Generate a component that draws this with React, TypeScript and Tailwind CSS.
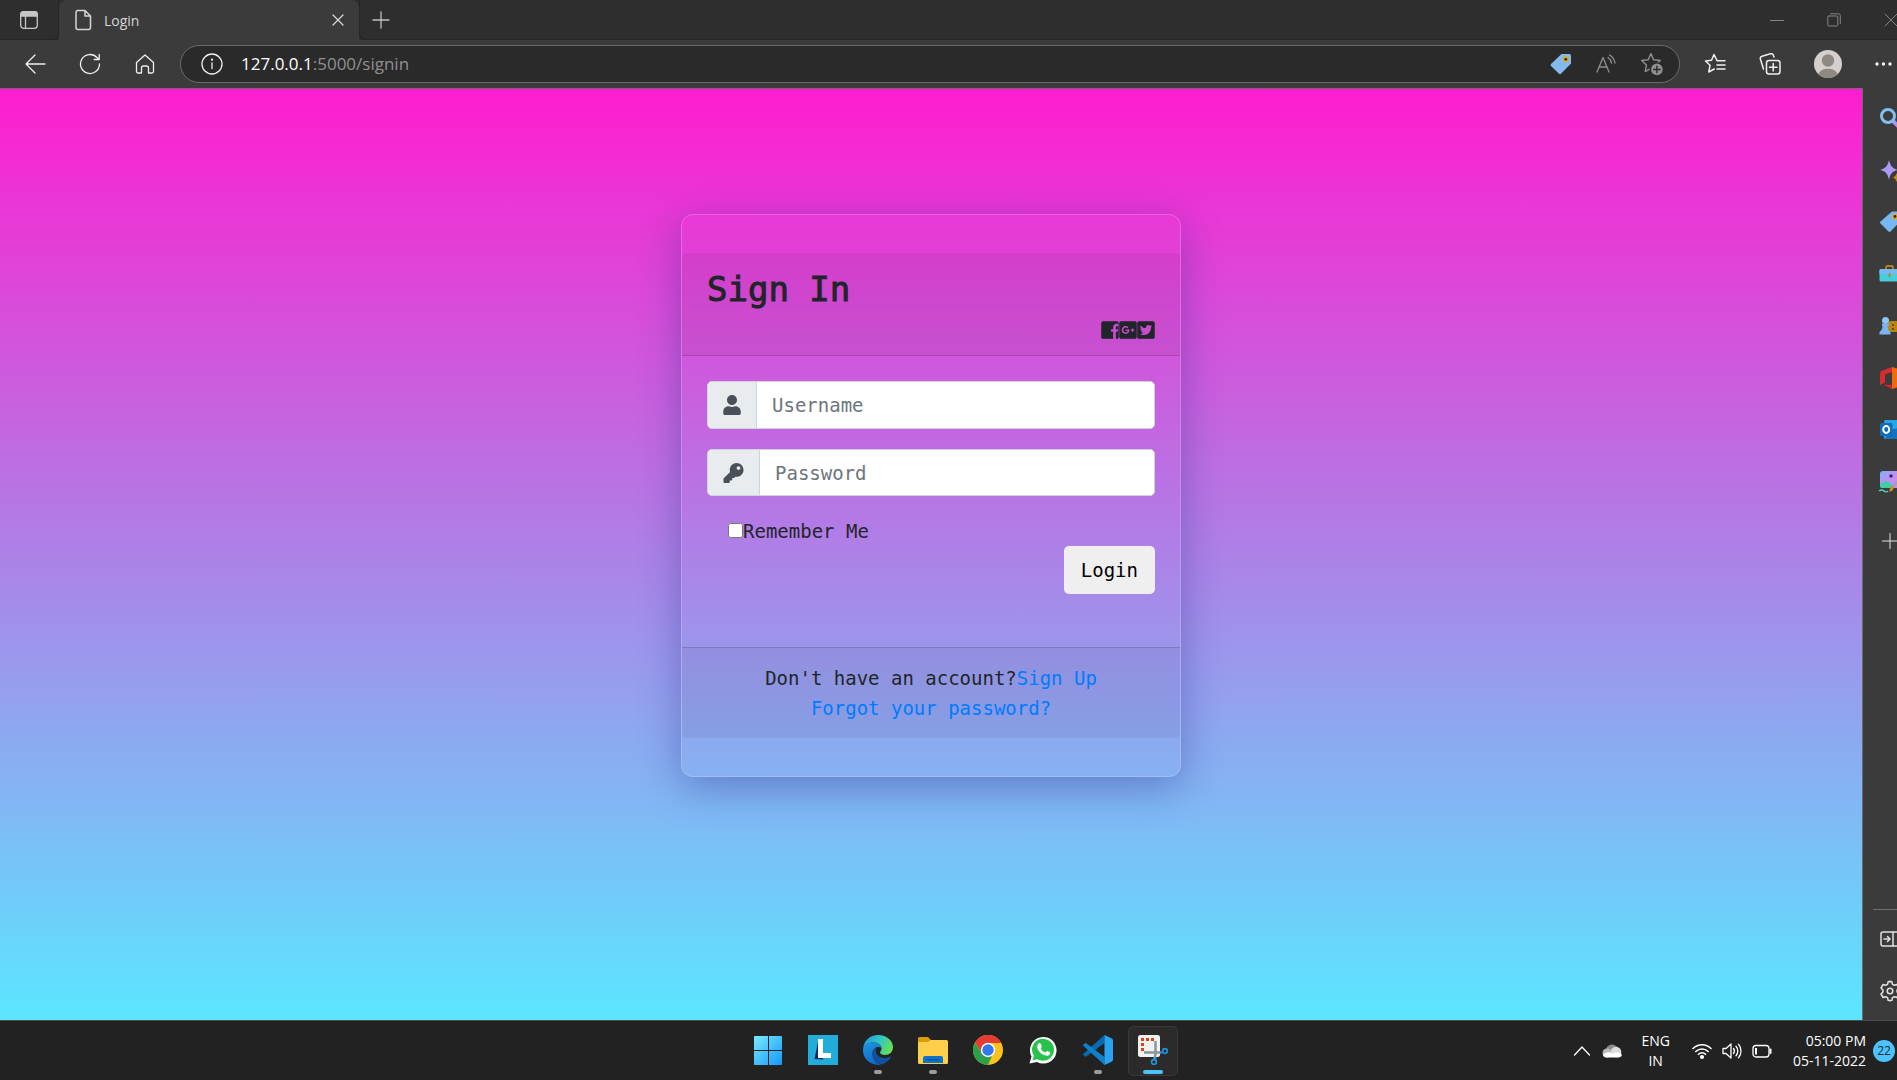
import React from "react";
import { FaUser, FaKey, FaGooglePlusSquare, FaTwitterSquare } from "react-icons/fa";

type IconProps = { size?: number; box?: string; className?: string; sw?: number; children: React.ReactNode };

function Icon({ size = 20, box = "0 0 20 20", className = "", sw = 1.3, children }: IconProps) {
  return (
    <svg
      width={size}
      height={size}
      viewBox={box}
      fill="none"
      stroke="currentColor"
      strokeWidth={sw}
      strokeLinecap="round"
      strokeLinejoin="round"
      aria-hidden="true"
      className={"shrink-0 " + className}
    >
      {children}
    </svg>
  );
}

const iconButton = "flex h-9 w-9 shrink-0 items-center justify-center";
const starPath = "M10 1.5l2.5 5.6 6 .7-4.4 4.1 1.1 6L10 15l-5.2 2.9 1.1-6L1.5 7.8l6-.7z";

function TabStrip() {
  return (
    <header className="flex h-10 bg-[#2e2e2e] text-[#d6d6d6]">
      <div className="flex w-[59px] shrink-0 items-center justify-center rounded-br-md border-b border-r border-[#262626]">
        <button aria-label="Tab actions">
          <Icon size={20} className="text-[#c6c6c6]">
            <rect x="1.7" y="1.7" width="16.6" height="16.6" rx="3" />
            <path d="M2 3.5Q2 2 3.5 2h13Q18 2 18 3.5V6H2z" fill="currentColor" />
            <path d="M6.5 6v12" />
          </Icon>
        </button>
      </div>
      <div className="flex w-[300px] shrink-0 items-center rounded-t-lg bg-[#3b3b3b] pl-[13px] pr-[7px]">
        <Icon size={22} box="0 0 22 22" sw={1.5}>
          <path d="M5 1.5h8l5.5 5.5v11.5a2 2 0 0 1-2 2H6a2 2 0 0 1-2-2v-15a2 2 0 0 1 2-2zM13 1.8V7h5.3" />
        </Icon>
        <span className="ml-[10px] flex-1 font-['Open_Sans',sans-serif] text-[14px]">Login</span>
        <button aria-label="Close tab" className="flex h-6 w-7 items-center justify-center">
          <Icon size={12} box="0 0 12 12">
            <path d="M1 1l10 10M11 1L1 11" />
          </Icon>
        </button>
      </div>
      <div className="flex flex-1 items-center rounded-bl-md border-b border-l border-[#262626] pl-3">
        <button aria-label="New tab">
          <Icon size={18} box="0 0 18 18" className="text-[#c0c0c0]">
            <path d="M9 1v16M1 9h16" />
          </Icon>
        </button>
        <div className="ml-auto flex items-center gap-[43px] pr-[22px] text-[#858585]">
          <button aria-label="Minimize">
            <Icon size={14} box="0 0 14 14" sw={1}><path d="M.5 7.5h13" /></Icon>
          </button>
          <button aria-label="Restore">
            <Icon size={14} box="0 0 14 14" sw={1}>
              <rect x=".8" y="3" width="10" height="10" rx="1" />
              <path d="M3.5 .8h8a1.8 1.8 0 0 1 1.8 1.8v8" />
            </Icon>
          </button>
          <button aria-label="Close window">
            <Icon size={14} box="0 0 14 14" sw={1}><path d="M1 1l12 12M13 1L1 13" /></Icon>
          </button>
        </div>
      </div>
    </header>
  );
}

function Toolbar() {
  return (
    <div className="flex h-12 shrink-0 items-center bg-[#3b3b3b] text-[#efefef]">
      <div className="flex w-[180px] shrink-0 items-center gap-[19px] pl-[17px]">
        <button aria-label="Back" className={iconButton}>
          <Icon size={22} box="0 0 22 22"><path d="M21 11H2M11 2L2 11l9 9" /></Icon>
        </button>
        <button aria-label="Refresh" className={iconButton}>
          <Icon size={22} box="0 0 22 22">
            <path d="M20.500 11a9.500 9.500 0 1 1-2.600-6.500L20 6.300M20.200 1.500v5h-5" />
          </Icon>
        </button>
        <button aria-label="Home" className={iconButton}>
          <Icon size={22} box="0 0 22 22">
            <path d="M2.500 9.500L11 2l8.500 7.500v9a1.500 1.500 0 0 1-1.500 1.500h-3.500v-5a2 2 0 0 0-2-2h-3a2 2 0 0 0-2 2v5H4a1.500 1.500 0 0 1-1.500-1.500z" />
          </Icon>
        </button>
      </div>
      <div className="flex h-[38px] flex-1 items-center rounded-full border border-[#6b6b6b] bg-[#2a2a2a] pl-[20px] pr-[15px]">
        <button aria-label="Site information">
          <Icon size={22} box="0 0 22 22">
            <circle cx="11" cy="11" r="10" />
            <path d="M11 10v5.500" />
            <circle cx="11" cy="6.700" r=".5" fill="currentColor" />
          </Icon>
        </button>
        <div className="ml-[18px] flex-1 whitespace-nowrap font-['Open_Sans',sans-serif] text-[17px] text-[#909090]">
          <span className="text-white">127.0.0.1</span>:5000/signin
        </div>
        <div className="flex items-center gap-[23px] text-[#8f8f8f]">
          <button aria-label="Shopping"><TagIcon /></button>
          <button aria-label="Read aloud">
            <Icon size={22} box="0 0 22 22">
              <path d="M2 19L8 4.500 14 19M4 14h8" />
              <path d="M13 4.500a8 8 0 0 1 3.500 5.500M14.500 2a11 11 0 0 1 5.500 8" />
            </Icon>
          </button>
          <button aria-label="Add to favorites">
            <Icon size={24} box="0 0 22 22">
              <path d={starPath} />
              <circle cx="15.500" cy="16" r="6" fill="#8f8f8f" stroke="#2a2a2a" />
              <path d="M15.500 13v6M12.500 16h6" stroke="#2a2a2a" />
            </Icon>
          </button>
        </div>
      </div>
      <div className="flex w-[240px] shrink-0 items-center pl-[17px]">
        <button aria-label="Favorites" className={iconButton}>
          <Icon size={22} box="0 0 22 22" sw={1.500}>
            <path d="M13 7.500L10 1.500 7.500 7.300 1.500 8l4.500 4.300L4.800 19l5.500-3M13 7.800h8M13 12h8M13 16h8" />
          </Icon>
        </button>
        <button aria-label="Collections" className={iconButton + " ml-[19px]"}>
          <Icon size={22} box="0 0 22 22" sw={1.500}>
            <rect x="7.500" y="7.500" width="13.500" height="13.500" rx="2.500" />
            <path d="M14.200 10.500v7.500M10.500 14.200H18M4.500 16L1.500 6.500A2.500 2.500 0 0 1 3 3.300l8.500-2.500a2.500 2.500 0 0 1 3 1.700l.5 1.500" />
          </Icon>
        </button>
        <button aria-label="Profile" className={iconButton + " ml-[22px]"}>
          <svg width="28" height="28" viewBox="0 0 28 28" aria-hidden="true">
            <circle cx="14" cy="14" r="14" fill="#d3d0cd" />
            <circle cx="14" cy="10.500" r="6.200" fill="#8f8984" />
            <path d="M4.200 24a10.500 8 0 0 1 19.600 0A14 14 0 0 1 4.200 24z" fill="#8f8984" />
          </svg>
        </button>
        <button aria-label="Settings and more" className={iconButton + " ml-[20px]"}>
          <svg width="18" height="4" viewBox="0 0 18 4" fill="#f4f4f4" aria-hidden="true">
            <circle cx="2" cy="2" r="1.700" /><circle cx="8.500" cy="2" r="1.700" /><circle cx="15" cy="2" r="1.700" />
          </svg>
        </button>
      </div>
    </div>
  );
}

function TagIcon() {
  return (
    <svg width="22" height="22" viewBox="0 0 22 22" aria-hidden="true">
      <path d="M11.500 1h8A1.500 1.500 0 0 1 21 2.500v8L11 20.700a1.500 1.500 0 0 1-2 0L1 13a1.500 1.500 0 0 1 0-2z" fill="#83b9ec" />
      <circle cx="15.800" cy="6.300" r="3" fill="#e0aa14" />
      <circle cx="15.800" cy="6.300" r="1.400" fill="#322b19" />
    </svg>
  );
}

function FacebookIcon() {
  return (
    <svg width="18" height="20" viewBox="0 0 448 512" fill="currentColor" aria-hidden="true">
      <path d="M448 80v352c0 26.500-21.500 48-48 48h-26V302.800h46.600l8.700-67.600H374V192c0-19.600 5.400-32.900 33.500-32.900H436V98.700c-6.200-.8-19.400-2.700-44.200-2.700-51.600 0-87 31.500-87 89.400v49.900H250v67.600h54.800V480H48c-26.500 0-48-21.500-48-48V80c0-26.500 21.500-48 48-48h352c26.500 0 48 21.500 48 48z" />
    </svg>
  );
}

function SignInCard() {
  const field = "flex overflow-hidden rounded-[5px] border border-[#ced4da] bg-white";
  const addon = "flex items-center border-r border-[#ced4da] bg-[#e9ecef] px-[15px] text-[#495057]";
  const input = "min-w-0 flex-1 bg-white px-[15px] text-[#495057] outline-none placeholder:text-[#6c757d] placeholder:opacity-100";
  return (
    <section className="w-full max-w-[500px] rounded-[12px] border border-white/20 py-[38px] font-['DejaVu_Sans_Mono',monospace] text-[19px] leading-[30px] text-[#212529] shadow-[0_10px_40px_rgba(31,38,135,0.37)]">
      <div className="rounded-t-[5px] border-b border-black/15 bg-black/5 px-[25px] py-[15px]">
        <h3 className="mb-[10px] text-[34px] leading-[42px] [-webkit-text-stroke:1px_#212529]">Sign In</h3>
        <div className="flex h-5 items-center justify-end">
          <a href="#facebook" aria-label="Facebook"><FacebookIcon /></a>
          <a href="#google" aria-label="Google Plus"><FaGooglePlusSquare className="h-5 w-[18px]" /></a>
          <a href="#twitter" aria-label="Twitter"><FaTwitterSquare className="h-5 w-[18px]" /></a>
        </div>
      </div>
      <form className="px-[25px] pb-[53px] pt-[25px]" onSubmit={(e) => e.preventDefault()}>
        <div className={field + " h-12"}>
          <label htmlFor="username" aria-label="Username" className={addon}><FaUser className="h-5 w-[18px]" /></label>
          <input id="username" type="text" placeholder="Username" className={input} />
        </div>
        <div className={field + " mt-5 h-[47px]"}>
          <label htmlFor="password" aria-label="Password" className={addon}><FaKey className="h-5 w-[21px]" /></label>
          <input id="password" type="password" placeholder="Password" className={input} />
        </div>
        <div className="mt-5 flex h-[30px] items-center pl-[21px]">
          <input id="remember" type="checkbox" className="mb-[2px] h-[15px] w-[15px]" />
          <label htmlFor="remember">Remember Me</label>
        </div>
        <div className="flex justify-end">
          <button type="submit" className="h-12 rounded-[5px] bg-[#efefef] px-[17px] text-black">Login</button>
        </div>
      </form>
      <div className="rounded-b-[5px] border-t border-black/15 bg-black/5 py-[15px] text-center">
        <div>Don't have an account?<a href="#signup" className="text-[#007bff]">Sign Up</a></div>
        <div><a href="#forgot" className="text-[#007bff]">Forgot your password?</a></div>
      </div>
    </section>
  );
}

function SideSvg({ children }: { children: React.ReactNode }) {
  return <svg width="24" height="24" viewBox="0 0 24 24" aria-hidden="true">{children}</svg>;
}

function Sidebar() {
  const items: [string, React.ReactNode][] = [
    ["Search", <SideSvg>
      <path d="M15 15l6 6" stroke="#b58cf0" strokeWidth="4" strokeLinecap="round" />
      <circle cx="10" cy="10" r="6.500" fill="none" stroke="#7fc0f2" strokeWidth="3" />
    </SideSvg>],
    ["Discover", <SideSvg>
      <path d="M11 2c1.400 6 3 8 9 10-6 1.500-7.600 3.500-9 10-1.400-6.500-3-8.500-9-10 6-2 7.600-4 9-10z" fill="#a99bf6" />
      <path d="M18.500 15c.8 3 1.500 3.600 4 4.500-2.500.8-3.200 1.500-4 4.500-.8-3-1.500-3.700-4-4.500 2.500-.9 3.200-1.500 4-4.500z" fill="#c58c12" />
    </SideSvg>],
    ["Shopping", <SideSvg>
      <path d="M14 1.500h7A1.500 1.500 0 0 1 22.500 3v8L12.500 21.500a1.500 1.500 0 0 1-2 0l-8-8a1.500 1.500 0 0 1 0-2z" fill="#78b7f5" />
      <circle cx="17" cy="6.500" r="3" fill="#e0aa14" /><circle cx="17" cy="6.500" r="1.400" fill="#32271a" />
    </SideSvg>],
    ["Tools", <SideSvg>
      <path d="M8 7V5.500A1.500 1.500 0 0 1 9.500 4h4A1.500 1.500 0 0 1 15 5.500V7" fill="none" stroke="#b8860f" strokeWidth="1.800" />
      <rect x="1.500" y="7" width="21" height="12.500" rx="1.500" fill="#46cfd8" />
      <path d="M1.500 8.500A1.500 1.500 0 0 1 3 7h18a1.500 1.500 0 0 1 1.500 1.500V12h-21z" fill="#76b9f5" />
      <rect x="10.500" y="11" width="2" height="4" rx="1" fill="#b8860f" />
    </SideSvg>],
    ["Games", <SideSvg>
      <rect x="10" y="7" width="14" height="11" rx="3" fill="#b8860f" />
      <circle cx="15" cy="11" r="1" fill="#4a3a10" /><circle cx="15" cy="15" r="1" fill="#4a3a10" />
      <circle cx="7.500" cy="6.500" r="3.500" fill="#8ec4f8" />
      <path d="M4 9.500h7v2L9.800 12c0 3 .7 4.500 2.700 6v2.500h-11V18c2-1.500 3-3 3-6L4 11.500z" fill="#7ab4f2" />
    </SideSvg>],
    ["Office", <SideSvg>
      <path d="M14 1l8 2.500v17L14 23z" fill="#f06a0c" />
      <path d="M14 1v5L7 8.500v8L2 19V7.500Q2 5.500 4 4.800z" fill="#d82b2f" />
      <path d="M6 18.500l8 .5v4l-7-3.500z" fill="#d8232d" />
    </SideSvg>],
    ["Outlook", <SideSvg>
      <rect x="6" y="2" width="18" height="19" rx="1.500" fill="#2aa5e8" />
      <path d="M12 12l12-3v12H7z" fill="#1773bd" />
      <rect x="2" y="5" width="12.500" height="13" rx="1.500" fill="#0f6cbd" />
      <ellipse cx="8.200" cy="11.500" rx="3" ry="3.400" fill="none" stroke="#fff" strokeWidth="2" />
    </SideSvg>],
    ["Drop", <SideSvg>
      <defs><linearGradient id="drop" x1="0" y1="0" x2="1" y2="1"><stop stopColor="#7db4f6" /><stop offset=".5" stopColor="#c48df2" /></linearGradient></defs>
      <rect x="2" y="1" width="20" height="17" rx="3" fill="url(#drop)" />
      <path d="M2 15c4-5 8-5 12 0v3H4a2 2 0 0 1-2-2z" fill="#3fcfa8" />
      <circle cx="13" cy="6" r="1.700" fill="#38264a" />
      <path d="M22 9l-8 9" stroke="#a99bb8" strokeWidth="2.500" />
      <path d="M15 16c1.500 2 0 6-4 5.500 1-1 .5-5 4-5.500z" fill="#cf8a1b" />
      <path d="M1 21c3-2 4-1 5 0s3 1 4 0" fill="none" stroke="#58d3b6" strokeWidth="1.500" />
    </SideSvg>],
  ];
  return (
    <aside className="flex w-[58px] shrink-0 flex-col items-center border-l border-[#6b6b6b] bg-[#3b3b3b] pr-[3px] text-[#e0e0e0]">
      <div className="flex flex-col items-center gap-[28px] pt-[18px]">
        {items.map(([name, icon]) => (
          <button key={name} aria-label={name}>{icon}</button>
        ))}
        <button aria-label="Add" className="mt-[11px]">
          <Icon size={16} box="0 0 16 16" sw={1}><path d="M8 .5v15M.5 8h15" /></Icon>
        </button>
      </div>
      <div className="mt-auto flex w-full flex-col items-center pb-[18px]">
        <div className="mb-[19px] w-[34px] border-t border-[#707070]" />
        <button aria-label="Hide sidebar" className="mb-[31px]">
          <Icon size={20} sw={1.500}>
            <rect x="1" y="3" width="18" height="14" rx="2" /><path d="M13 3v14M4 10h6M7.500 7.500L10 10l-2.500 2.500" />
          </Icon>
        </button>
        <button aria-label="Settings">
          <Icon size={22} box="0 0 24 24" sw={1.700}>
            <circle cx="12" cy="12" r="3" />
            <path d="M12 1.500l2 .3.700 3 2 1 2.800-.9 2.300 3.800-2.100 2.200v2.200l2.100 2.200-2.300 3.800-2.800-.9-2 1-.7 3-2 .3-2-.3-.7-3-2-1-2.800.9-2.300-3.800 2.100-2.200v-2.200L2.200 8.700l2.300-3.800 2.800.9 2-1 .7-3z" />
          </Icon>
        </button>
      </div>
    </aside>
  );
}

function AppIcon({ children }: { children: React.ReactNode }) {
  return <svg width="30" height="30" viewBox="0 0 30 30" aria-hidden="true" className="shrink-0">{children}</svg>;
}

const apps: { name: string; state: "idle" | "open" | "active"; icon: React.ReactNode }[] = [
  { name: "Start", state: "idle", icon: <AppIcon>
    <defs><linearGradient id="win" x1="0" y1="0" x2="1" y2="1"><stop stopColor="#7aeaff" /><stop offset="1" stopColor="#1398fa" /></linearGradient></defs>
    <rect x="1" y="1" width="28" height="29" rx="1" fill="url(#win)" />
    <path d="M15.500 0v30M0 15.500h30" stroke="#212121" strokeWidth="1" />
  </AppIcon> },
  { name: "Laragon", state: "idle", icon: <AppIcon>
    <path d="M0 0h30v30H0z" fill="#22acd9" />
    <path d="M10 7L6.500 24l9 .5L12 20z" fill="#11265f" />
    <path d="M10 4h5v14h8v5H10z" fill="#fff" />
  </AppIcon> },
  { name: "Edge", state: "open", icon: <AppIcon>
    <defs>
      <linearGradient id="ea" x1="0" y1="0.300" x2="1" y2="0.600"><stop stopColor="#2099e3" /><stop offset=".5" stopColor="#32c6c4" /><stop offset="1" stopColor="#6be04d" /></linearGradient>
      <linearGradient id="eb" x1="0" y1="0" x2=".6" y2="1"><stop stopColor="#1e9be0" /><stop offset="1" stopColor="#0f64c8" /></linearGradient>
    </defs>
    <path d="M0 14C1 5 7 0 15 0c9 0 15 6 15 12 0 5-3.500 8-8 8-3 0-5-1-5-2.500 0-1 1.500-1.500 1.500-4C18.500 10 15 7.500 10 7.500 5 7.500 1 10 0 14z" fill="url(#ea)" />
    <path d="M0 15C0 10 4.500 7.500 10 7.500c5 0 8 2.500 8.400 5.200C16 11 10 12 9.500 18c-.4 6 5 11 9 11.500-9 2-18.500-4-18.500-14.500z" fill="url(#eb)" />
    <path d="M13 12.500c-5 3-4.500 14.500 5.500 17 4-.8 7.500-4 9.300-7 .5-1-.3-1.200-1-.8-7 3.500-15.500-.5-13.800-9.200z" fill="#11529f" />
  </AppIcon> },
  { name: "File Explorer", state: "open", icon: <AppIcon>
    <path d="M0 3.500A1.500 1.500 0 0 1 1.500 2H10l3.500 3.500V10H0z" fill="#dd9d09" />
    <path d="M0 7h10l3-2h15.500A1.500 1.500 0 0 1 30 6.500v21a1.500 1.500 0 0 1-1.500 1.500h-27A1.500 1.500 0 0 1 0 27.500z" fill="#fecf4b" />
    <path d="M5 28v-5a2 2 0 0 1 2-2h16a2 2 0 0 1 2 2v5z" fill="#0f73c8" />
    <path d="M9 24.700h12" stroke="#0b4f96" strokeWidth="1.200" strokeLinecap="round" />
  </AppIcon> },
  { name: "Chrome", state: "idle", icon: <AppIcon>
    <circle cx="15" cy="15" r="15" fill="#fcc31e" />
    <path d="M15 8h13.300A15 15 0 0 0 2 7.500l7 11z" fill="#e53b30" />
    <path d="M2 7.500l6.900 11L15 22l4-1-4 9A15 15 0 0 1 2 7.500z" fill="#2ba14b" />
    <circle cx="15" cy="15" r="7.200" fill="#fff" /><circle cx="15" cy="15" r="5.700" fill="#3278ea" />
  </AppIcon> },
  { name: "WhatsApp", state: "idle", icon: <AppIcon>
    <path d="M1.500 28.500l2-7A13.300 13.300 0 1 1 9 27z" fill="#fff" />
    <path d="M4.500 25.300l1.300-4.500A11 11 0 1 1 9.500 24.300z" fill="#29c24c" />
    <path d="M10.800 8.300c.7-.4 1.500-.3 1.800.3l1.200 2.700c.1.700-1.200 1.700-1.100 2.200.9 1.900 2.400 3.300 4.400 4 .7.200 1.500-1.600 2.200-1.500l2.500 1.200c.6.400.4 1.500-.1 2.200-1.200 1.500-3.200 1.700-5.200.9-3.500-1.400-6-4-7.100-6.900-.6-2 .1-4.200 1.400-5.100z" fill="#fff" />
  </AppIcon> },
  { name: "Visual Studio Code", state: "open", icon: <AppIcon>
    <path d="M.5 18.800L21.500 0v8L3.200 21.500a1 1 0 0 1-1.300-.1L.5 20.200a1 1 0 0 1 0-1.400z" fill="#0869b5" />
    <path d="M.5 9.500L2 8.200a1 1 0 0 1 1.300 0L21.500 22v8L.5 11a1 1 0 0 1 0-1.500z" fill="#107fcc" />
    <path d="M21.500 0l7 3.200A2.500 2.500 0 0 1 30 5.500v19a2.500 2.500 0 0 1-1.500 2.300l-7 3.200z" fill="#29a3ef" />
  </AppIcon> },
  { name: "Snipping Tool", state: "active", icon: <AppIcon>
    <rect x="0" y="0" width="22" height="22" rx="2.500" fill="#f2f2f2" />
    <path d="M3 4.500h13M4.500 3v13" stroke="#d9430d" strokeWidth="3" strokeDasharray="3 2" />
    <path d="M17.500 6v13l-1 5M6 17.500h17" stroke="#8b959d" strokeWidth="2.500" fill="none" />
    <circle cx="27" cy="16" r="2.400" fill="none" stroke="#1795df" strokeWidth="1.700" />
    <circle cx="16" cy="27" r="2.400" fill="none" stroke="#1795df" strokeWidth="1.700" />
    <path d="M22 18l3-1M17 25l1-3" stroke="#1795df" strokeWidth="1.700" />
  </AppIcon> },
];

function Taskbar() {
  return (
    <footer className="flex h-[60px] shrink-0 items-center border-t border-[#4a4a48] bg-[#212221] font-['Open_Sans',sans-serif] text-[14px] leading-5 text-white">
      <div className="flex-1 pl-[25px]" />
      <nav className="flex gap-[5px]">
        {apps.map((a) => (
          <button
            key={a.name}
            aria-label={a.name}
            className={
              "flex h-[50px] w-[50px] flex-col items-center rounded-[5px] pt-[8px] " +
              (a.state === "active" ? "border border-[#3a3836] bg-[#2d2b2a]" : "border border-transparent")
            }
          >
            {a.icon}
            {a.state === "open" && <span className="mt-[5px] h-1 w-2 shrink-0 rounded-full bg-[#9b9b9b]" />}
            {a.state === "active" && <span className="mt-[5px] h-1 w-5 shrink-0 rounded-full bg-[#4cc2ff]" />}
          </button>
        ))}
      </nav>
      <div className="flex flex-1 items-center justify-end pr-[25px]">
        <button aria-label="Show hidden icons">
          <Icon size={18} box="0 0 18 18"><path d="M1.500 13L9 5l7.500 8" /></Icon>
        </button>
        <svg width="20" height="14" viewBox="0 0 20 14" aria-hidden="true" className="ml-[11px]">
          <circle cx="10" cy="6.500" r="6" fill="#8c8c8c" /><circle cx="5" cy="9" r="4.500" fill="#bcbcbc" />
          <circle cx="14" cy="8" r="5.300" fill="#dcdcdc" /><path d="M1 11c3-4 7-3 9-1.500 3-1.500 7-1 9.500.5 1 2-1 3.500-3 3.500H4c-1.500 0-2.500-1-3-2.500z" fill="#fff" />
        </svg>
        <button className="ml-[19px] text-center">ENG<br />IN</button>
        <button aria-label="Network, volume and battery" className="ml-[22px] flex items-center gap-[10px]">
          <Icon sw={1.600}>
            <path d="M1 7.500a12.700 12.700 0 0 1 18 0M3.800 10.500a8.800 8.800 0 0 1 12.400 0M6.500 13.300a5 5 0 0 1 7 0" />
            <circle cx="10" cy="16" r="1.300" fill="currentColor" />
          </Icon>
          <Icon>
            <path d="M1 7.500h3L9 3v14l-5-4.500H1zM11.500 7.500a4 4 0 0 1 0 5M14 5.300a7 7 0 0 1 0 9.400M16.500 3.200a10.500 10.500 0 0 1 0 13.600" />
          </Icon>
          <Icon>
            <rect x="1" y="4.500" width="16" height="11.500" rx="3" /><rect x="3" y="7" width="2" height="6.500" fill="currentColor" stroke="none" /><path d="M18.500 8.500v3.500" strokeWidth="2" />
          </Icon>
        </button>
        <button className="ml-[21px] text-right">05:00 PM<br />05-11-2022</button>
        <span className="ml-[7px] flex h-[22px] w-[22px] items-center justify-center rounded-full bg-[#4cc2ff] text-[12px] text-[#17262e]">22</span>
      </div>
    </footer>
  );
}

export default function App() {
  return (
    <div className="overflow-hidden">
      <div className="flex min-h-screen w-[calc(100%+23px)] flex-col">
        <TabStrip />
        <Toolbar />
        <div className="flex flex-1">
          <main className="flex flex-1 items-start justify-center border-t border-[#77677a] bg-[linear-gradient(to_bottom,#ff1dcf,#5be6ff)] pt-[125px]">
            <SignInCard />
          </main>
          <Sidebar />
        </div>
        <Taskbar />
      </div>
    </div>
  );
}
